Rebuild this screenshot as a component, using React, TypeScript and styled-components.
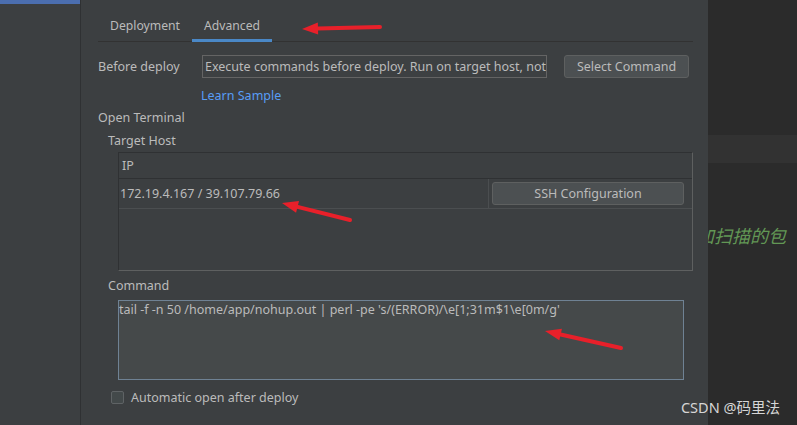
import React from "react";
import styled, {createGlobalStyle} from "styled-components";

const GlobalStyle = createGlobalStyle`
    html, body {
        margin: 0;
        padding: 0;
        background: #3c3f41;
    }

    body {
        font-family: "Noto Sans", "Noto Sans CJK SC", sans-serif;
        font-size: 12.5px;
        color: #bbbbbb;
    }
`;

const Page = styled.div`
    position: relative;
    display: flex;
    width: 797px;
    height: 425px;
    overflow: hidden;
    background: #3c3f41;
`;

const Sidebar = styled.div`
    width: 80px;
    flex: 0 0 80px;
    border-right: 1px solid #2f3133;

    .selected {
        height: 4px;
        background: #4b6eaf;
    }
`;

const Dialog = styled.div`
    flex: 0 0 627px;
    display: flex;
    flex-direction: column;
    padding: 0 15px 0 17px;
    box-sizing: border-box;
`;

const Editor = styled.div`
    flex: 1 1 0;
    display: flex;
    flex-direction: column;
    background: #2b2b2b;
    overflow: hidden;
`;

const EditorBand = styled.div`
    height: 28px;
    margin-top: 135px;
    background: #323232;
`;

const Comment = styled.div`
    margin: 60px 0 0 -12px;
    white-space: nowrap;
    font-family: "Noto Sans CJK SC", sans-serif;
    font-style: italic;
    font-size: 18px;
    line-height: 24px;
    color: #629755;
`;

const TabBar = styled.div`
    display: flex;
    height: 41px;
    border-bottom: 1px solid #323232;
`;

const Tab = styled.div<{$active?: boolean}>`
    display: flex;
    align-items: center;
    padding: 8px 12px 0;
    font-size: 12.2px;
    box-shadow: ${({$active}) => $active ? "inset 0 -3px 0 #4a88c7" : "none"};
    margin-bottom: -1px;
`;

const FieldRow = styled.div`
    display: flex;
    align-items: center;
    margin-top: 13px;
    height: 23px;
`;

const Label = styled.div<{$width?: number; $indent?: number}>`
    width: ${({$width}) => $width ? `${$width}px` : "auto"};
    padding-left: ${({$indent}) => $indent || 0}px;
    line-height: 23px;
    white-space: nowrap;
`;

const TextField = styled.div`
    width: 345px;
    height: 23px;
    box-sizing: border-box;
    border: 1px solid #646464;
    background: #3d4042;
    padding: 0 2px;
    line-height: 21px;
    white-space: nowrap;
    overflow: hidden;
`;

const Button = styled.div<{$width: number}>`
    width: ${({$width}) => $width}px;
    height: 23px;
    box-sizing: border-box;
    border: 1px solid #5e6060;
    border-radius: 3px;
    background: #4c5052;
    text-align: center;
    line-height: 21px;
    white-space: nowrap;
`;

const Link = styled.div`
    margin: 10px 0 0 103px;
    line-height: 16px;
    color: #589df6;
`;

const TableBox = styled.div`
    margin-left: 20px;
    height: 119px;
    box-sizing: border-box;
    border: 1px solid #2f3133;
    border-right-color: #5e6060;
    border-bottom-color: #5e6060;
    display: flex;
    flex-direction: column;
`;

const HeaderCell = styled.div`
    height: 25px;
    line-height: 25px;
    padding-left: 3px;
    border-bottom: 1px solid #2f3133;
`;

const TableRow = styled.div`
    display: flex;
    height: 29px;
    border-bottom: 1px solid #4b4e50;
`;

const IpCell = styled.div`
    flex: 1 1 0;
    padding-left: 1px;
    line-height: 29px;
    border-right: 1px solid #4b4e50;
`;

const ButtonCell = styled.div`
    width: 200px;
    display: flex;
    align-items: center;
    padding-left: 3px;
`;

const TextArea = styled.div`
    margin: 3px 0 0 20px;
    width: 566px;
    height: 80px;
    box-sizing: border-box;
    border: 1px solid #6f8294;
    background: #45494a;
    line-height: 18px;
    white-space: nowrap;
    overflow: hidden;
`;

const CheckRow = styled.div`
    display: flex;
    align-items: center;
    gap: 7px;
    margin: 9px 0 0 13px;
    height: 16px;
`;

const CheckBox = styled.div`
    width: 13px;
    height: 13px;
    box-sizing: border-box;
    border: 1px solid #5f6365;
    border-radius: 2px;
    background: #43494a;
`;

const Watermark = styled.div`
    position: absolute;
    right: 17px;
    bottom: 8px;
    font-family: "Noto Sans", "Noto Sans CJK SC", sans-serif;
    font-size: 14.5px;
    color: #d6d6d6;
`;

const Arrows = styled.svg`
    position: absolute;
    left: 0;
    top: 0;
    pointer-events: none;
`;

function Arrow({x1, y1, x2, y2}: {x1: number; y1: number; x2: number; y2: number}) {
    // 红色标注箭头, (x2, y2) 为箭头尖
    const a = Math.atan2(y2 - y1, x2 - x1);
    const len = 16, w = 6;
    const bx = x2 - Math.cos(a) * len, by = y2 - Math.sin(a) * len;
    const px = -Math.sin(a) * w, py = Math.cos(a) * w;
    return (
        <g>
            <line x1={x1} y1={y1} x2={bx} y2={by} stroke="#e8202a" strokeWidth={4} strokeLinecap="round" />
            <polygon points={`${x2},${y2} ${bx + px},${by + py} ${bx - px},${by - py}`} fill="#e8202a" />
        </g>
    );
}

export default function App() {
    return (
        <Page>
            <GlobalStyle />
            <Sidebar>
                <div className="selected" />
            </Sidebar>
            <Dialog>
                <TabBar>
                    <Tab>Deployment</Tab>
                    <Tab $active>Advanced</Tab>
                </TabBar>
                <FieldRow>
                    <Label $width={104}>Before deploy</Label>
                    <TextField>Execute commands before deploy. Run on target host, not</TextField>
                    <Button $width={125} style={{marginLeft: 17}}>Select Command</Button>
                </FieldRow>
                <Link>Learn Sample</Link>
                <Label style={{marginTop: 2}}>Open Terminal</Label>
                <Label $indent={10}>Target Host</Label>
                <TableBox>
                    <HeaderCell>IP</HeaderCell>
                    <TableRow>
                        <IpCell>172.19.4.167 / 39.107.79.66</IpCell>
                        <ButtonCell>
                            <Button $width={192}>SSH Configuration</Button>
                        </ButtonCell>
                    </TableRow>
                </TableBox>
                <Label $indent={10} style={{marginTop: 3}}>Command</Label>
                <TextArea>tail -f -n 50 /home/app/nohup.out | perl -pe 's/(ERROR)/\e[1;31m$1\e[0m/g'</TextArea>
                <CheckRow>
                    <CheckBox />
                    <span>Automatic open after deploy</span>
                </CheckRow>
            </Dialog>
            <Editor>
                <EditorBand />
                <Comment>加扫描的包</Comment>
            </Editor>
            <Watermark>CSDN @码里法</Watermark>
            <Arrows width={797} height={425}>
                <Arrow x1={380} y1={27} x2={302} y2={29} />
                <Arrow x1={350} y1={220} x2={282} y2={203} />
                <Arrow x1={621} y1={348} x2={545} y2={331} />
            </Arrows>
        </Page>
    );
}
